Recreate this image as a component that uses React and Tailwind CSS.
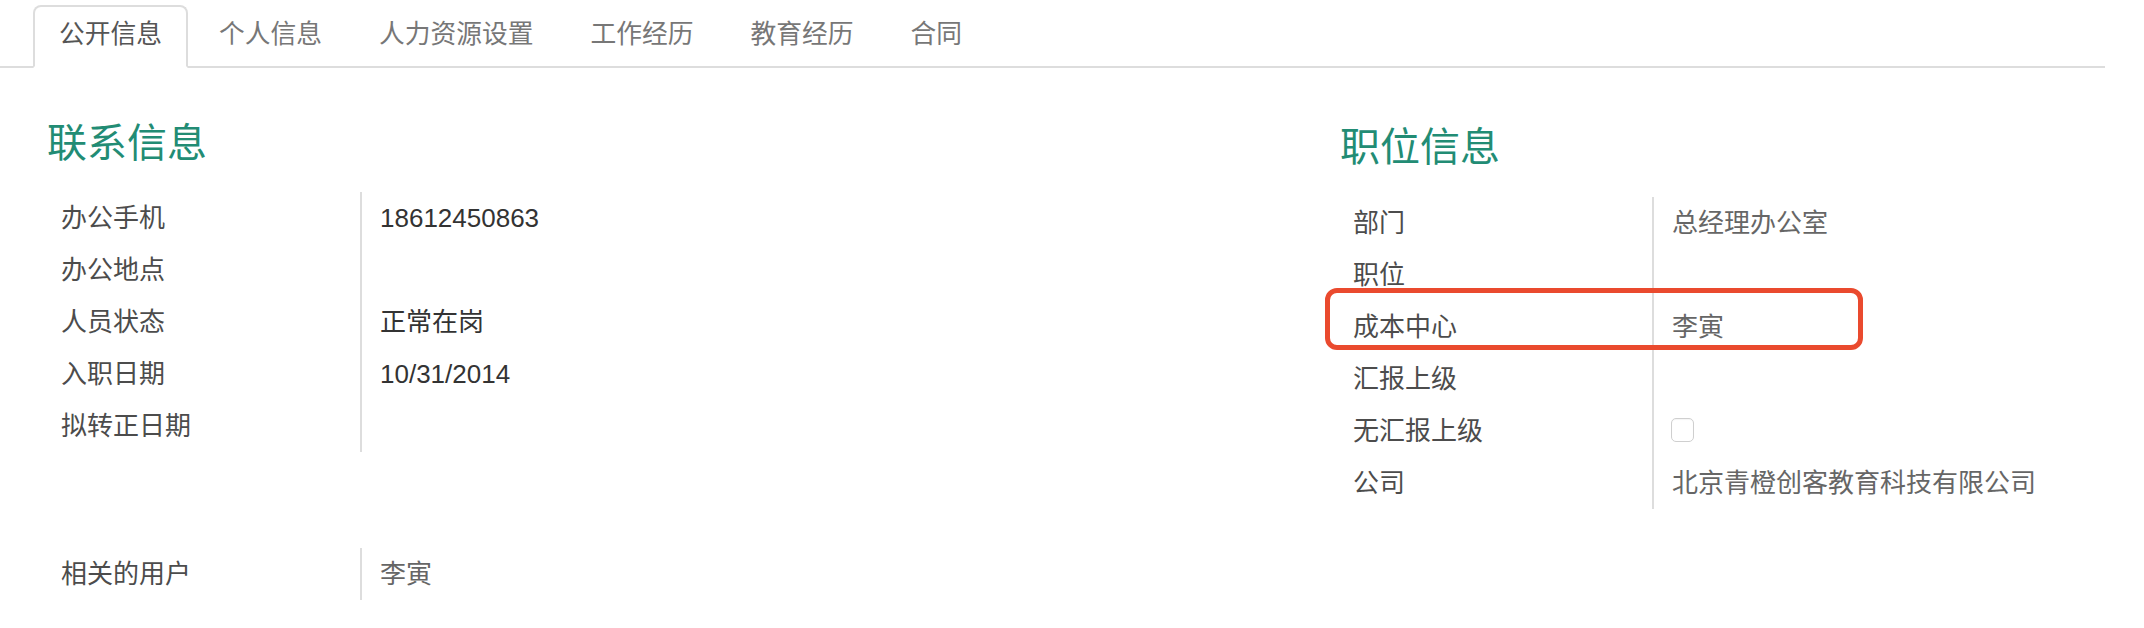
import React from 'react';

const tabs = ['公开信息', '个人信息', '人力资源设置', '工作经历', '教育经历', '合同'];

const contactRows = [
  { label: '办公手机', value: '18612450863' },
  { label: '办公地点', value: '' },
  { label: '人员状态', value: '正常在岗' },
  { label: '入职日期', value: '10/31/2014' },
  { label: '拟转正日期', value: '' },
];

const jobRows = [
  { label: '部门', value: '总经理办公室', link: true },
  { label: '职位', value: '' },
  { label: '成本中心', value: '李寅', link: true, marked: true },
  { label: '汇报上级', value: '' },
  { label: '无汇报上级', checkbox: true },
  { label: '公司', value: '北京青橙创客教育科技有限公司', link: true },
];

// one label / value line of the form
const Field = ({ row }) => (
  <div className="relative flex h-[52px]">
    <div className="flex w-[312px] items-center pl-[13px] text-[#4c4c4c]">{row.label}</div>
    <div className={`flex flex-1 items-center border-l-2 border-[#dddddd] pl-[18px] ${row.link ? 'text-[#666666]' : 'text-[#333333]'}`}>
      {row.checkbox ? (
        <span className="-ml-[1px] -mt-[3px] block h-[24px] w-[23px] rounded-[5px] border border-[#cfcfcf] bg-white shadow-[inset_0_1px_1px_rgba(0,0,0,0.04)]"></span>
      ) : (
        row.value
      )}
    </div>
    {/* hand drawn highlight from the screenshot */}
    {row.marked && (
      <div className="pointer-events-none absolute -left-[15px] -top-[13px] h-[62px] w-[538px] rounded-[12px] border-[5px] border-[#ea4a2e]"></div>
    )}
  </div>
);

const App = () => {
  return (
    <div className="h-[628px] w-full overflow-hidden bg-white text-[26px] font-['Liberation_Sans','Noto_Sans_CJK_SC',sans-serif]">
      {/* Notebook tabs */}
      <div className="mr-[39px] flex border-b-2 border-[#dddddd] pl-[33px] pt-[5px]">
        {tabs.map((tab, i) => (
          <div
            key={tab}
            className={`-mb-[2px] mr-[5px] flex h-[63px] items-center rounded-t-[8px] border-2 px-[24px] pb-[4px] text-[25.75px] ${
              i === 0
                ? 'border-[#dddddd] border-b-white bg-white text-[#555555]'
                : 'border-transparent text-[#777777]'
            }`}
          >
            {tab}
          </div>
        ))}
      </div>

      {/* Sheet content */}
      <div className="flex pl-[47px]">
        <div className="w-[1293px]">
          <h2 className="mt-[56px] text-[40px] leading-[39px] text-[#228c74]">联系信息</h2>
          <div className="mt-[29px] pl-[1px]">
            {contactRows.map((row) => (
              <Field key={row.label} row={row} />
            ))}
          </div>
          <div className="mt-[96px] pl-[1px]">
            <Field row={{ label: '相关的用户', value: '李寅', link: true }} />
          </div>
        </div>

        <div className="flex-1 pt-[4px]">
          <h2 className="mt-[56px] text-[40px] leading-[39px] text-[#228c74]">职位信息</h2>
          <div className="mt-[30px]">
            {jobRows.map((row) => (
              <Field key={row.label} row={row} />
            ))}
          </div>
        </div>
      </div>
    </div>
  );
};

export default App;
